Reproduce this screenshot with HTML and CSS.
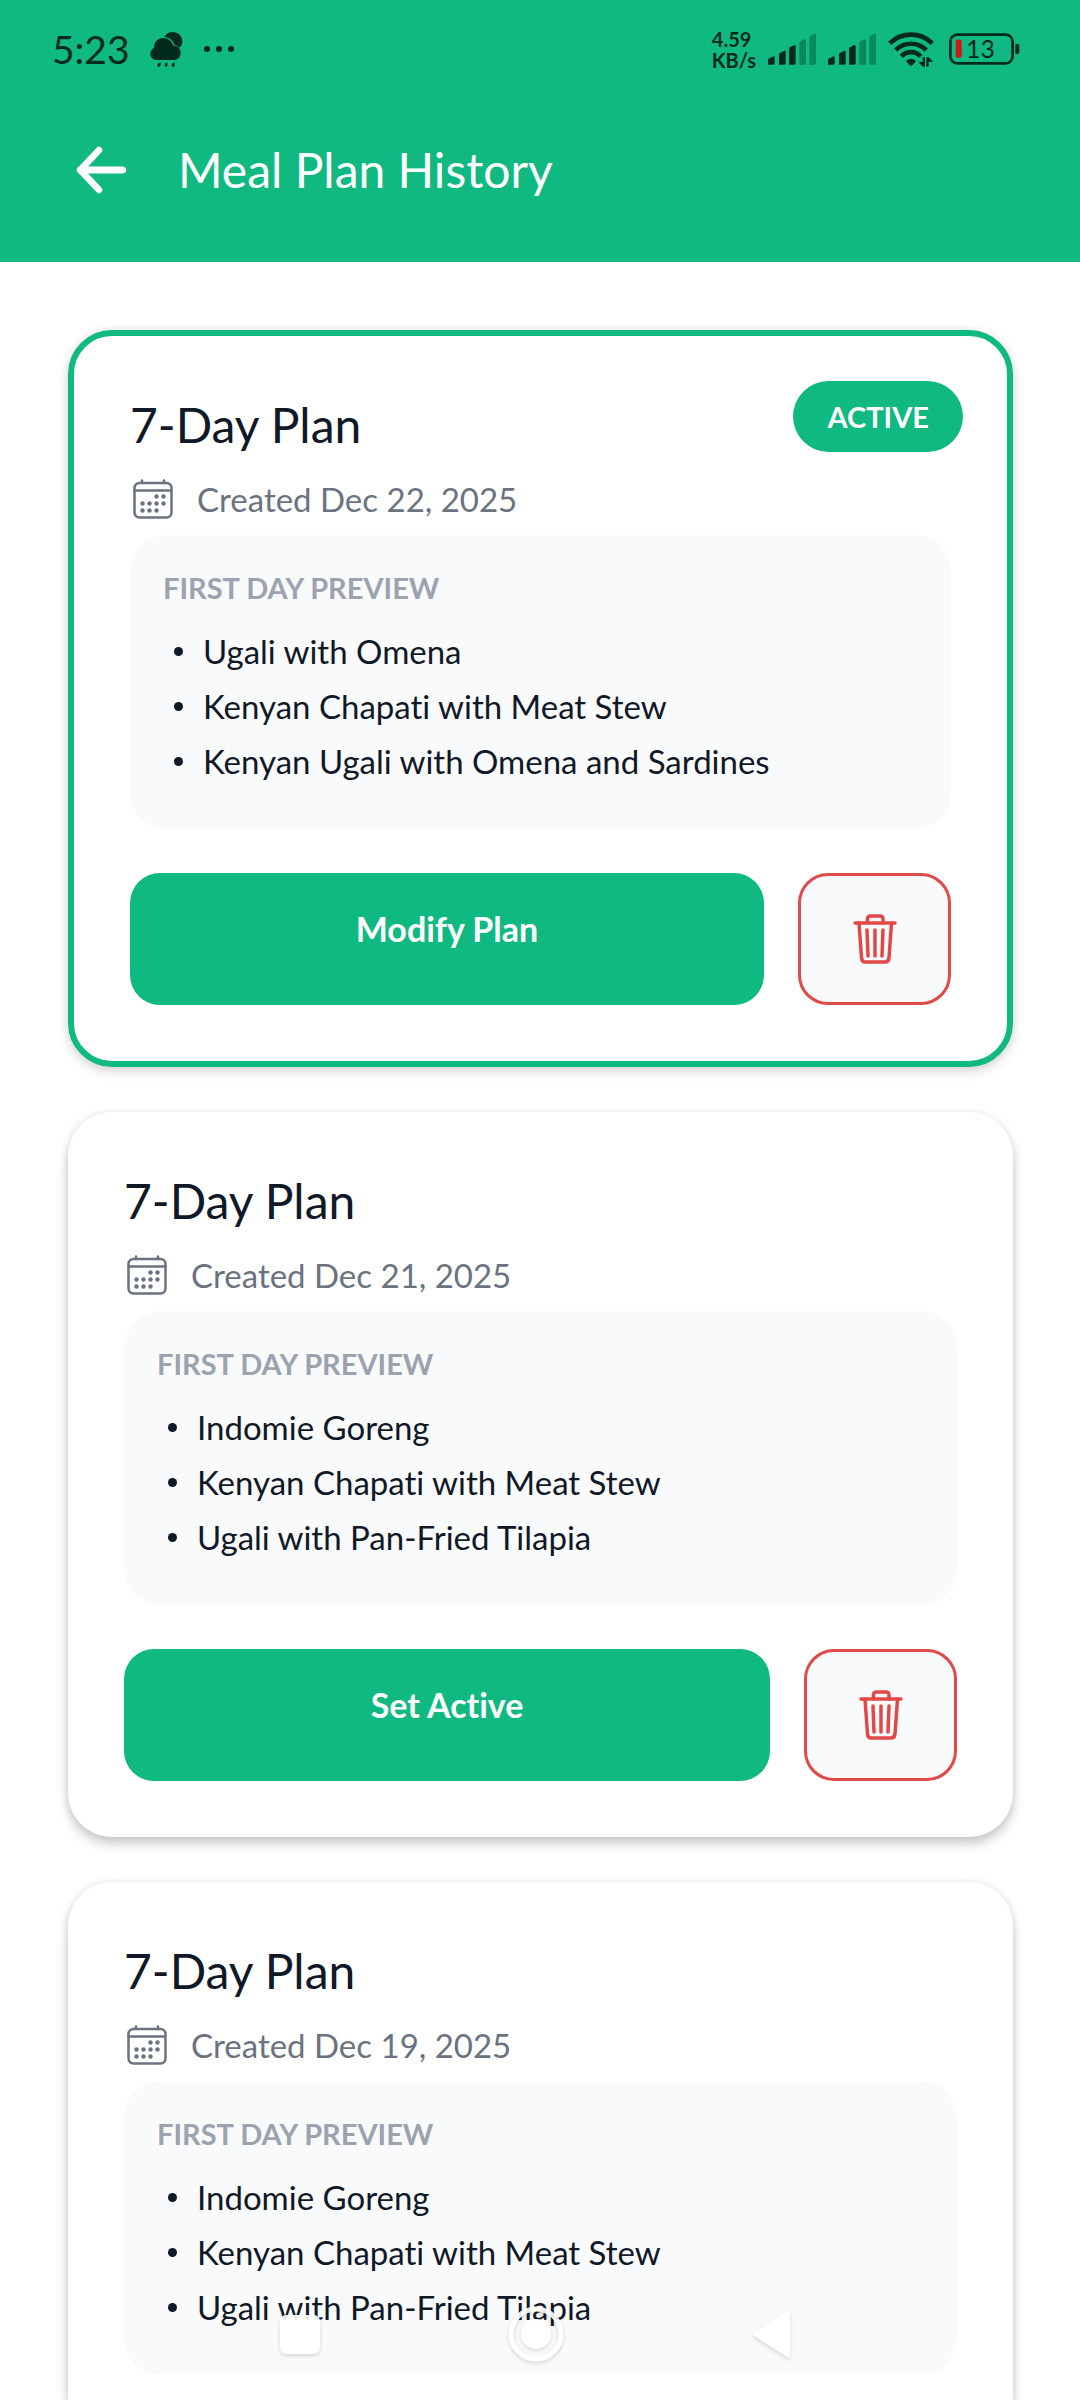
FILE: index.html
```html
<!DOCTYPE html>
<html lang="en">
<head>
<meta charset="utf-8">
<meta name="viewport" content="width=device-width, initial-scale=1">
<title>Meal Plan History</title>
<link rel="stylesheet" href="styles.css">
</head>
<body>
<svg class="defs" aria-hidden="true">
  <symbol id="calendar" viewBox="0 0 40 40">
    <g fill="none" stroke="currentColor" stroke-width="2.500" stroke-linecap="round">
      <rect x="1.500" y="4" width="37" height="34.500" rx="5"/>
      <path d="M1.500 11.500H38M9 1.500V4M31 1.500V4"/>
    </g>
    <g fill="currentColor">
      <circle cx="23.500" cy="17.500" r="2.200"/><circle cx="30.500" cy="17.500" r="2.200"/>
      <circle cx="9.500" cy="24.500" r="2.200"/><circle cx="16.500" cy="24.500" r="2.200"/><circle cx="23.500" cy="24.500" r="2.200"/><circle cx="30.500" cy="24.500" r="2.200"/>
      <circle cx="9.500" cy="31.500" r="2.200"/><circle cx="16.500" cy="31.500" r="2.200"/><circle cx="23.500" cy="31.500" r="2.200"/>
    </g>
  </symbol>
  <symbol id="trash" viewBox="0 0 44 52">
    <g fill="none" stroke="currentColor" stroke-width="3.500" stroke-linecap="round" stroke-linejoin="round">
      <path d="M2 10H42"/>
      <path d="M14.500 10V6Q14.500 3 17.500 3H27Q30 3 30 6V10"/>
      <path d="M6 10L8.500 45Q9 49 12 49H32Q35.500 49 36 45L38.500 10"/>
      <path d="M14 17L15 43M22 17V43M30 17L29 43"/>
    </g>
  </symbol>
  <symbol id="signal" viewBox="0 0 144 94">
    <path d="M0 94V79Q1 76 4 75L17 69Q20 68 20 72V90Q20 94 16 94ZM33 94V62Q34 59 37 58L49 52Q53 51 53 55V90Q53 94 49 94ZM63 94V45Q64 42 67 41L79 35Q83 34 83 38V90Q83 94 79 94Z"/>
    <path opacity="0.350" d="M94 94V28Q95 25 98 24L110 18Q114 17 114 21V90Q114 94 110 94ZM124 94V11Q125 8 128 7L140 1Q144 0 144 4V90Q144 94 140 94Z"/>
  </symbol>
</svg>

<div class="app">
  <header class="top">
    <div class="status">
      <span class="clock">5:23</span>
      <svg class="weather" viewBox="0 0 98 106" aria-hidden="true">
        <path d="M42 15C49 5 56 0 68 0C84 0 97 12 97 28C97 36 94 43 88 48C84 43 79 40 73 39C70 27 59 16 42 15Z"/>
        <path d="M20 85C8 85 0 77 0 67C0 58 5 51 12 48C10 31 22 18 39 18C54 18 66 27 69 41C82 41 92 50 92 63C92 76 84 85 71 85Z"/>
        <path d="M22 105V98Q23 93 31 92V100Q31 105 27 105ZM44 105V98Q45 93 52 92V100Q52 105 48 105ZM65 105V98Q66 93 74 92V100Q74 105 70 105Z"/>
      </svg>
      <svg class="more" viewBox="0 0 32 8" aria-hidden="true"><circle cx="4" cy="4" r="3"/><circle cx="16" cy="4" r="3"/><circle cx="28" cy="4" r="3"/></svg>
      <div class="speed"><span>4.59</span><span>KB/s</span></div>
      <svg class="signal" aria-hidden="true"><use href="#signal"/></svg>
      <svg class="signal" aria-hidden="true"><use href="#signal"/></svg>
      <svg class="wifi" viewBox="0 0 138 106" aria-hidden="true">
        <g fill="none" stroke="currentColor" stroke-width="14">
          <path d="M5 36A92 92 0 0 1 133 36"/><path d="M23 56A66 66 0 0 1 115 56"/><path d="M40 75A40 40 0 0 1 98 75"/>
        </g>
        <path d="M54 89Q69 76 84 89L74 101Q69 105 64 101ZM104 78H111V106H104L94 95V91L104 92ZM115 106V78H122L133 88V92L122 91V106Z"/>
      </svg>
      <svg class="battery" role="img" viewBox="0 0 212 94" aria-label="Battery">
        <rect x="4" y="4" width="186" height="86" rx="21" fill="none" stroke="currentColor" stroke-width="8"/>
        <path d="M204 37V57" fill="none" stroke="currentColor" stroke-width="12" stroke-linecap="round"/>
        <rect x="20" y="19" width="18" height="54" rx="6" fill="#cf1717"/>
        <text x="94" y="74" text-anchor="middle" class="charge">13</text>
      </svg>
    </div>
    <div class="bar">
      <button class="back" type="button" aria-label="Back">
        <svg viewBox="0 0 48 46" aria-hidden="true"><path d="M22 4L4 23L22 42M4 23H45" fill="none" stroke="currentColor" stroke-width="6.500" stroke-linecap="round" stroke-linejoin="round"/></svg>
      </button>
      <h1>Meal Plan History</h1>
    </div>
  </header>

  <main class="list">
    <article class="card card-active">
      <span class="badge">ACTIVE</span>
      <h2>7-Day Plan</h2>
      <p class="created"><svg aria-hidden="true"><use href="#calendar"/></svg>Created Dec 22, 2025</p>
      <section class="preview">
        <h3>FIRST DAY PREVIEW</h3>
        <ul><li>Ugali with Omena</li><li>Kenyan Chapati with Meat Stew</li><li>Kenyan Ugali with Omena and Sardines</li></ul>
      </section>
      <div class="actions">
        <button class="primary" type="button">Modify Plan</button>
        <button class="delete" type="button" aria-label="Delete plan"><svg aria-hidden="true"><use href="#trash"/></svg></button>
      </div>
    </article>

    <article class="card">
      <h2>7-Day Plan</h2>
      <p class="created"><svg aria-hidden="true"><use href="#calendar"/></svg>Created Dec 21, 2025</p>
      <section class="preview">
        <h3>FIRST DAY PREVIEW</h3>
        <ul><li>Indomie Goreng</li><li>Kenyan Chapati with Meat Stew</li><li>Ugali with Pan-Fried Tilapia</li></ul>
      </section>
      <div class="actions">
        <button class="primary" type="button">Set Active</button>
        <button class="delete" type="button" aria-label="Delete plan"><svg aria-hidden="true"><use href="#trash"/></svg></button>
      </div>
    </article>

    <article class="card card-last">
      <h2>7-Day Plan</h2>
      <p class="created"><svg aria-hidden="true"><use href="#calendar"/></svg>Created Dec 19, 2025</p>
      <section class="preview">
        <h3>FIRST DAY PREVIEW</h3>
        <ul><li>Indomie Goreng</li><li>Kenyan Chapati with Meat Stew</li><li>Ugali with Pan-Fried Tilapia</li></ul>
      </section>
    </article>
  </main>

  <nav class="system-nav" aria-label="System">
    <button type="button" aria-label="Recent apps"><svg viewBox="0 0 60 60" aria-hidden="true"><rect x="10" y="11" width="40" height="39" rx="6"/></svg></button>
    <button type="button" aria-label="Home"><svg viewBox="0 0 60 60" aria-hidden="true"><circle cx="30" cy="30" r="25" fill="none" stroke="#fff" stroke-width="5"/><circle cx="30" cy="30" r="15"/></svg></button>
    <button type="button" aria-label="Back"><svg viewBox="0 0 60 60" aria-hidden="true"><path d="M12 28Q10 30 12 32L45 53Q48 54 48 51V9Q48 6 45 7Z"/></svg></button>
  </nav>
</div>
</body>
</html>
```
FILE: styles.css
```css
* {
  box-sizing: border-box;
}

body,
h1,
h2,
h3,
p,
ul {
  margin: 0;
  padding: 0;
  font-weight: 400;
}

body {
  background: #fff;
  color: #111827;
  font-family: Lato, "Liberation Sans", sans-serif;
  font-variant-ligatures: none;
}

button {
  border: 0;
  padding: 0;
  background: none;
  font: inherit;
  font-variant-ligatures: none;
  cursor: pointer;
}

svg {
  display: block;
  flex: none;
  fill: currentColor;
}

.defs {
  position: absolute;
  width: 0;
  height: 0;
}

.app {
  display: flex;
  flex-direction: column;
  height: 100vh;
}

/* Header */

.top {
  flex: none;
  background: #10b981;
  color: #fff;
}

.status {
  display: flex;
  align-items: center;
  height: 98px;
  padding: 0 60px 0 52px;
  color: #032b1d;
}

.clock {
  font-size: 39px;
  line-height: 48px;
}

.weather {
  width: 33px;
  height: 35px;
  margin-left: 20px;
}

.more {
  width: 32px;
  height: 8px;
  margin-left: 20px;
}

.speed {
  display: grid;
  gap: 1px;
  margin-left: auto;
  margin-right: 12px;
  font-size: 20px;
  font-weight: 700;
  line-height: 20px;
}

.signal {
  width: 48px;
  height: 32px;
  margin-right: 12px;
}

.wifi {
  width: 46px;
  height: 36px;
  margin-right: 15px;
}

.battery {
  width: 71px;
  height: 32px;
}

.charge {
  font-size: 74px;
}

.bar {
  display: flex;
  align-items: center;
  gap: 52px;
  height: 164px;
  padding: 0 76px 20px;
}

.back {
  color: inherit;
}

.back svg {
  width: 50px;
  height: 48px;
}

h1,
h2 {
  font-size: 48px;
  line-height: 66px;
}

/* Plan cards */

.list {
  display: flex;
  flex: 1;
  flex-direction: column;
  gap: 45px;
  min-height: 0;
  padding: 68px 67px 0 68px;
  overflow-y: auto;
  scrollbar-width: none;
}

.card {
  position: relative;
  flex: none;
  padding: 56px;
  border-radius: 44px;
  background: #fff;
  box-shadow: 0 7px 12px rgba(0, 0, 0, 0.2), 0 0 8px rgba(0, 0, 0, 0.08);
}

.card-active {
  border: 6px solid #10b981;
  box-shadow: 0 4px 12px rgba(0, 0, 0, 0.16), 0 0 8px rgba(0, 0, 0, 0.05);
}

/* The final card runs on under the bottom edge of the list */
.card-last {
  flex: 1;
  padding-bottom: 0;
  border-radius: 44px 44px 0 0;
}

.badge {
  position: absolute;
  top: 45px;
  right: 44px;
  padding: 0 34px;
  border-radius: 36px;
  background: #10b981;
  color: #fff;
  font-size: 29px;
  font-weight: 700;
  line-height: 71px;
}

.created {
  display: flex;
  align-items: center;
  gap: 24px;
  margin: 19px 0 14px;
  padding-left: 3px;
  color: #6b7280;
  font-size: 33px;
  line-height: 44px;
}

.created svg {
  width: 40px;
  height: 40px;
}

.preview {
  padding: 33px 33px 40px;
  border-radius: 36px;
  background: #f9fafb;
}

h3 {
  margin-bottom: 16px;
  color: #9ca3af;
  font-size: 29px;
  font-weight: 700;
  line-height: 40px;
}

ul {
  list-style: none;
}

li {
  display: flex;
  align-items: center;
  gap: 20px;
  padding-left: 11px;
  font-size: 33px;
  line-height: 55px;
}

li::before {
  content: "";
  width: 9px;
  height: 9px;
  border-radius: 50%;
  background: currentColor;
}

.actions {
  display: flex;
  gap: 34px;
  margin-top: 44px;
}

.primary,
.delete {
  height: 132px;
  border-radius: 30px;
}

.primary {
  flex: 1;
  padding-bottom: 22px;
  background: #10b981;
  color: #fff;
  font-size: 34px;
  font-weight: 700;
}

.delete {
  display: grid;
  place-items: center;
  width: 153px;
  border: 3px solid #e04a4a;
  background: #f9fafb;
  color: #e34848;
}

.delete svg {
  width: 44px;
  height: 52px;
}

/* System navigation, floating over the list */

.system-nav {
  position: fixed;
  right: 0;
  bottom: 0;
  left: 0;
  display: flex;
  justify-content: center;
  gap: 176px;
  padding: 0 9px 36px 0;
  color: #fff;
  pointer-events: none;
}

.system-nav svg {
  width: 60px;
  height: 60px;
  overflow: visible;
  opacity: 0.9;
  filter: drop-shadow(0 2px 2px rgba(0, 0, 0, 0.16));
}

.system-nav button {
  color: inherit;
}
```
